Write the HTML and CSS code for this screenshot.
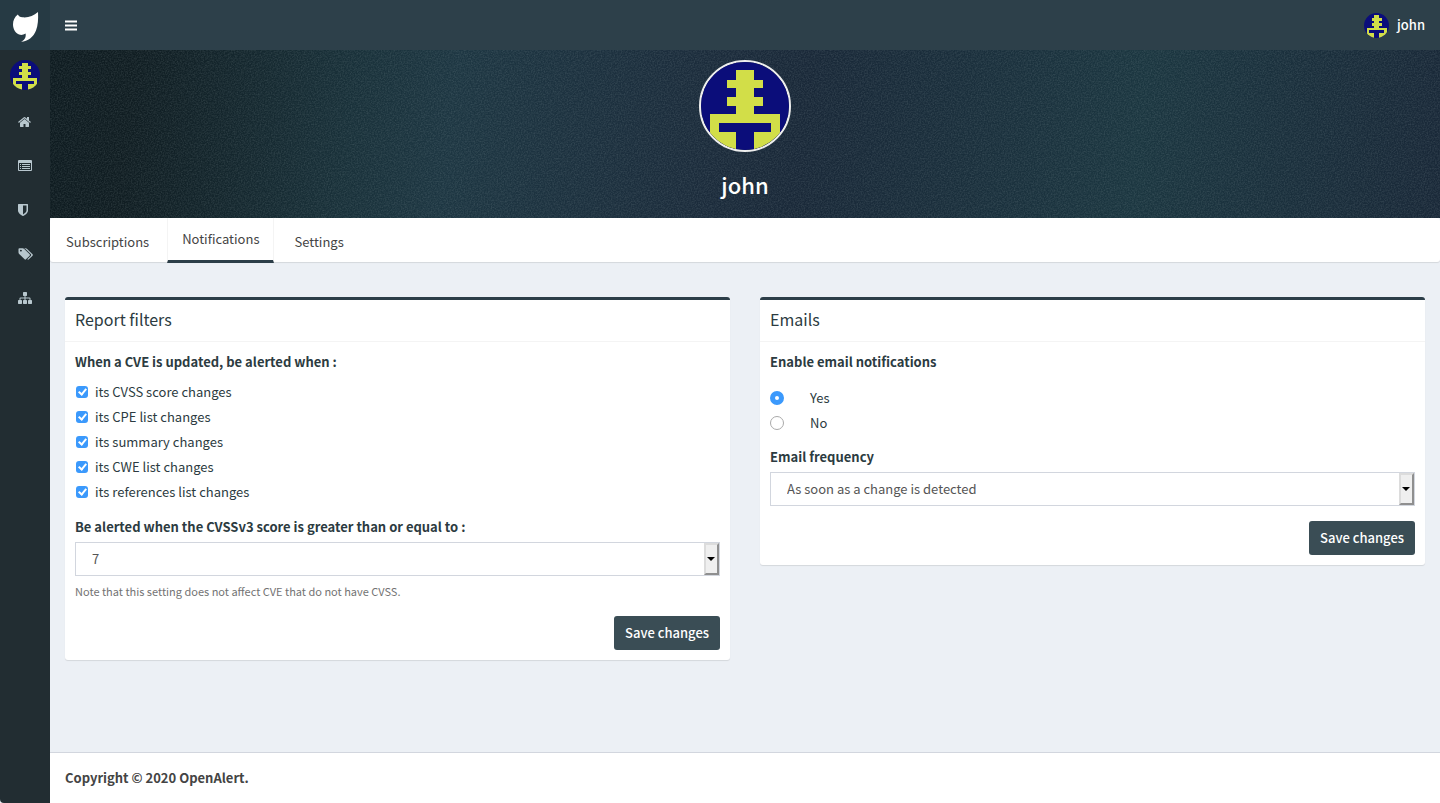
FILE: index.html
```html
<!DOCTYPE html>
<html lang="en">
<head>
<meta charset="utf-8">
<title>OpenAlert - Notifications</title>
<link rel="stylesheet" href="styles.css">
</head>
<body>
<svg class="defs" aria-hidden="true">
  <symbol id="avatar" viewBox="0 0 10 10">
    <rect width="10" height="10" fill="#0b0d7a"/>
    <path fill="#d2de48" shape-rendering="crispEdges" d="M4 .9h2V2h1v1H6v1h1v1H6v.9h3V10H6V7.900h2v-1H2v1h2V10H1V5.900h3V5H3V4h1V3H3V2h1z"/>
  </symbol>
</svg>
<div class="app">
  <aside class="sidebar">
    <a class="logo" href="#" aria-label="OpenAlert">
      <svg viewBox="0 0 50 50" fill="#fff"><path d="M38 12c.4 7 0 13.500-2 18.500-2.500 6.500-8 10.800-15 11.300 3-1.300 5.300-4 4.600-8.300-1.600 1-3.600 1.600-5.600 1.300C16 33.800 13 29.500 13 24.500c0-4 1.600-7.500 4.800-10 .8 1.500 2.300 2.600 4.500 2.800 6 .6 11.200-1.300 15.700-5.300z"/></svg>
    </a>
    <a class="side-user" href="#" aria-label="john"><svg><use href="#avatar"/></svg></a>
    <nav class="side-nav">
      <a href="#" aria-label="Home"><svg viewBox="0 0 1792 1792"><path d="M1408 992v480q0 26-19 45t-45 19h-384v-384h-256v384h-384q-26 0-45-19t-19-45v-480q0-1 .5-3t.5-3l575-474 575 474q1 2 1 6zm223-69l-62 74q-8 9-21 11h-3q-13 0-21-7l-692-577-692 577q-12 8-24 7-13-2-21-11l-62-74q-8-10-7-23.500t11-21.500l719-599q32-26 76-26t76 26l244 204v-195q0-14 9-23t23-9h192q14 0 23 9t9 23v408l219 182q10 8 11 21.500t-7 23.500z"/></svg></a>
      <a href="#" aria-label="Reports"><svg viewBox="0 0 14 14"><path fill-rule="evenodd" d="M1 1h12a1 1 0 0 1 1 1v9a1 1 0 0 1-1 1H1a1 1 0 0 1-1-1V2a1 1 0 0 1 1-1zm0 3v7h12V4zm1 1h1v1H2zm2 0h8v1H4zM2 7h1v1H2zm2 0h8v1H4zM2 9h1v1H2zm2 0h8v1H4z"/></svg></a>
      <a href="#" aria-label="Vulnerabilities"><svg class="narrow" viewBox="256 0 1280 1792"><path d="M1344 960v-640h-448v1137q119-63 213-137 235-184 235-360zm192-768v768q0 86-33.500 170.500t-83 150-118 127.500-126.500 103-121 77.500-89.500 49.500-42.500 20q-12 6-26 6t-26-6q-16-7-42.500-20t-89.500-49.500-121-77.500-126.500-103-118-127.500-83-150-33.500-170.500v-768q0-26 19-45t45-19h1152q26 0 45 19t19 45z"/></svg></a>
      <a href="#" aria-label="Categories"><svg class="wide" viewBox="64 0 1984 1792"><path d="M576 448q0-53-37.500-90.500t-90.500-37.500-90.500 37.500-37.500 90.500 37.500 90.500 90.500 37.500 90.500-37.500 37.500-90.500zm1067 576q0 53-37 90l-491 492q-39 37-91 37-53 0-90-37l-715-716q-38-37-64.500-101t-26.500-117v-416q0-52 38-90t90-38h416q53 0 117 26.500t102 64.500l715 714q37 39 37 91zm384 0q0 53-37 90l-491 492q-39 37-91 37-36 0-59-14t-53-45l470-470q37-37 37-90 0-52-37-91l-715-714q-38-38-102-64.500t-117-26.500h224q53 0 117 26.500t102 64.500l715 714q37 39 37 91z"/></svg></a>
      <a href="#" aria-label="Vendors"><svg viewBox="0 0 1792 1792"><path d="M1792 1248v320q0 40-28 68t-68 28h-320q-40 0-68-28t-28-68v-320q0-40 28-68t68-28h96v-192h-512v192h96q40 0 68 28t28 68v320q0 40-28 68t-68 28h-320q-40 0-68-28t-28-68v-320q0-40 28-68t68-28h96v-192h-512v192h96q40 0 68 28t28 68v320q0 40-28 68t-68 28h-320q-40 0-68-28t-28-68v-320q0-40 28-68t68-28h96v-192q0-52 38-90t90-38h512v-192h-96q-40 0-68-28t-28-68v-320q0-40 28-68t68-28h320q40 0 68 28t28 68v320q0 40-28 68t-68 28h-96v192h512q52 0 90 38t38 90v192h96q40 0 68 28t28 68z"/></svg></a>
    </nav>
  </aside>
  <div class="page">
    <header class="topbar">
      <button class="menu-toggle" type="button" aria-label="Toggle navigation"><svg viewBox="0 0 12 11"><path d="M0 .5h12v2H0zM0 4.500h12v2H0zM0 8.500h12v2H0z"/></svg></button>
      <a class="top-user" href="#"><svg><use href="#avatar"/></svg><span>john</span></a>
    </header>
    <section class="banner">
      <svg class="grain" aria-hidden="true">
        <filter id="noise"><feTurbulence type="fractalNoise" baseFrequency="0.7" numOctaves="2"/><feColorMatrix values="0 0 0 0 .5  0 0 0 0 .6  0 0 0 0 .6  1.500 0 0 0 -.5"/></filter>
        <rect width="100%" height="100%" filter="url(#noise)"/>
      </svg>
      <svg class="portrait"><use href="#avatar"/></svg>
      <h1>john</h1>
    </section>
    <nav class="tabs">
      <a href="#">Subscriptions</a>
      <a class="active" href="#" aria-current="page">Notifications</a>
      <a href="#">Settings</a>
    </nav>
    <main class="content">
      <form class="box">
        <h2>Report filters</h2>
        <div class="box-body">
          <fieldset>
            <legend>When a CVE is updated, be alerted when :</legend>
            <label class="check"><input type="checkbox" checked>its CVSS score changes</label>
            <label class="check"><input type="checkbox" checked>its CPE list changes</label>
            <label class="check"><input type="checkbox" checked>its summary changes</label>
            <label class="check"><input type="checkbox" checked>its CWE list changes</label>
            <label class="check"><input type="checkbox" checked>its references list changes</label>
          </fieldset>
          <label class="field-label" for="score">Be alerted when the CVSSv3 score is greater than or equal to :</label>
          <div class="select"><select id="score"><option>7</option></select></div>
          <p class="help">Note that this setting does not affect CVE that do not have CVSS.</p>
          <button class="btn" type="button">Save changes</button>
        </div>
      </form>
      <form class="box">
        <h2>Emails</h2>
        <div class="box-body">
          <fieldset class="radios">
            <legend>Enable email notifications</legend>
            <label class="radio"><input type="radio" name="enable" checked>Yes</label>
            <label class="radio"><input type="radio" name="enable">No</label>
          </fieldset>
          <label class="field-label" for="frequency">Email frequency</label>
          <div class="select"><select id="frequency"><option>As soon as a change is detected</option></select></div>
          <button class="btn" type="button">Save changes</button>
        </div>
      </form>
    </main>
    <footer class="footer">Copyright © 2020 OpenAlert.</footer>
  </div>
</div>
</body>
</html>
```
FILE: styles.css
```css
*, *::before, *::after { box-sizing: border-box; }
body {
  margin: 0;
  font: 13px/20px "Source Sans Pro", "Noto Sans CJK SC", sans-serif;
  color: #333;
  background: #ecf0f5;
}
a { color: inherit; text-decoration: none; }
svg { display: block; }
.defs { display: none; }
.app { display: flex; min-height: 100vh; }

.sidebar { flex: none; width: 50px; background: #222d32; border-bottom-left-radius: 4px; }
.logo { display: block; height: 50px; background: #263a44; }
.side-user { display: block; padding: 10px; }
.side-user svg { width: 30px; height: 30px; border-radius: 50%; }
.side-nav a { display: flex; align-items: center; height: 44px; padding-left: 18px; fill: #b8c7ce; }
.side-nav svg { width: 14px; height: 14px; }
.side-nav .narrow { width: 10px; }
.side-nav .wide { width: 15px; }

.page { flex: 1; min-width: 0; display: flex; flex-direction: column; }
.topbar { display: flex; justify-content: space-between; align-items: center; height: 50px; padding: 0 15px; background: #2d404a; color: #fff; }
.menu-toggle { border: 0; padding: 0; background: none; fill: #fff; }
.menu-toggle svg { width: 12px; height: 11px; }
.top-user { display: flex; align-items: center; gap: 8px; font-weight: 500; }
.top-user svg { width: 25px; height: 25px; border-radius: 50%; }

.banner {
  position: relative;
  display: flex; flex-direction: column; align-items: center;
  height: 168px; padding-top: 10px;
  background: linear-gradient(96deg, #0e1b20 0%, #101d22 6%, #19313a 22%, #1d3642 29%, #1b2b3b 48%, #192838 54%, #1b3640 78%, #192838 100%);
  color: #fff;
}
.grain { position: absolute; inset: 0; width: 100%; height: 100%; opacity: .18; }
.portrait { position: relative; width: 92px; height: 92px; border: 2px solid #eee; border-radius: 50%; }
h1 { position: relative; margin: 16px 0 0; font-size: 22px; line-height: 32px; font-weight: 500; }

.tabs { display: flex; height: 44px; background: #fff; border-radius: 3px; box-shadow: 0 1px 1px rgba(0,0,0,.1); color: #444; }
.tabs a { padding: 14px 18px 0 16px; }
.tabs .active { height: 45px; padding: 11px 14px 0; margin-right: 4px; border: solid #f4f4f4; border-width: 0 1px; border-bottom: 3px solid #2c3e48; }

.content { flex: 1; display: grid; grid-template-columns: 1fr 1fr; gap: 30px; align-items: start; padding: 35px 15px; color: #2c3b41; }
.box { background: #fff; border-top: 3px solid #2c3e48; border-radius: 3px; box-shadow: 0 1px 1px rgba(0,0,0,.1); }
h2 { margin: 0; padding: 9px 10px 11px; font-size: 16px; line-height: 21px; font-weight: 400; border-bottom: 1px solid #f4f4f4; }
.box-body { display: flex; flex-direction: column; padding: 10px; }
fieldset { margin: 0 0 13px; padding: 0; border: 0; min-width: 0; }
legend { padding: 0; margin-bottom: 7px; font-weight: 700; }
.radios { margin-bottom: 12px; }
.radios legend { margin-bottom: 13px; }
.field-label { font-weight: 700; margin-bottom: 5px; }
.check, .radio { display: flex; align-items: center; height: 25px; }
input { appearance: none; flex: none; margin: 0; }
.check { padding-left: 1px; gap: 7px; }
.check input { display: grid; place-items: center; width: 12px; height: 12px; border-radius: 3px; background: #3b99fc; }
.check input:checked::after { content: ""; width: 5px; height: 8px; margin-bottom: 2px; border: solid #fff; border-width: 0 2px 2px 0; transform: rotate(40deg); }
.radio { gap: 26px; }
.radio input { width: 14px; height: 14px; border: 1px solid #aaa; border-radius: 50%; }
.radio input:checked { border: 5px solid #3b99fc; }

.select { position: relative; }
select { appearance: none; display: block; width: 100%; height: 34px; padding: 0 16px; border: 1px solid #d2d6de; border-radius: 0; background: #fff; font: inherit; color: #555; }
.select::before { content: ""; position: absolute; top: 1px; right: 1px; bottom: 1px; width: 15px; background: #efefef; border: 2px solid; border-color: #dcdcdc #8f8f8f #8f8f8f #dcdcdc; pointer-events: none; }
.select::after { content: ""; position: absolute; top: 15px; right: 5px; border: solid transparent; border-width: 4px 4px 0; border-top-color: #000; pointer-events: none; }
.help { margin: 6px 0 15px; font-size: 11px; line-height: 19px; color: #737373; }
.btn { align-self: flex-end; height: 34px; padding: 0 11px; border: 0; border-radius: 3px; background: #3a4d55; color: #fff; font: inherit; font-weight: 500; }
.select + .btn { margin-top: 15px; }

.footer { padding: 15px; border-top: 1px solid #d2d6de; background: #fff; color: #444; font-weight: 700; }
```
